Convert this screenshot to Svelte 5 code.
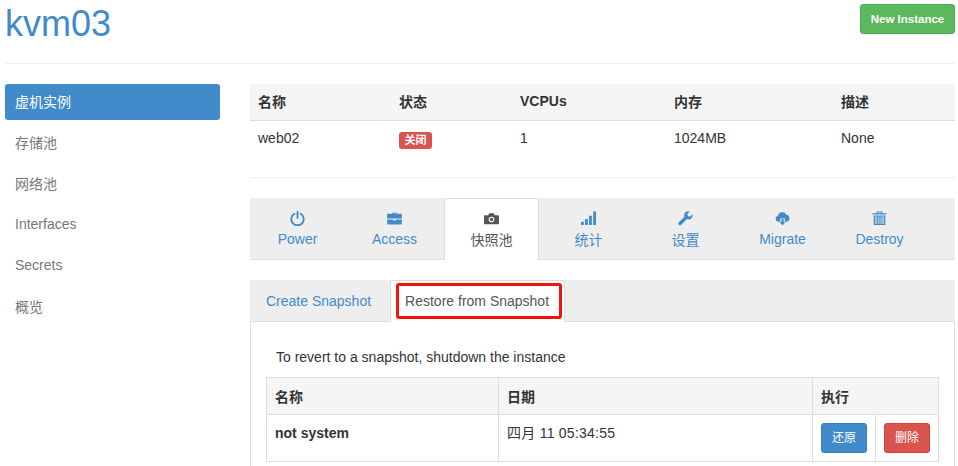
<script>
    const navItems = [
        { label: '虚机实例' },
        { label: '存储池' },
        { label: '网络池' },
        { label: 'Interfaces', latin: true },
        { label: 'Secrets', latin: true },
        { label: '概览' }
    ];

    const tabs = [
        { label: 'Power', icon: 'power', latin: true },
        { label: 'Access', icon: 'case', latin: true },
        { label: '快照池', icon: 'camera', active: true },
        { label: '统计', icon: 'bars' },
        { label: '设置', icon: 'wrench' },
        { label: 'Migrate', icon: 'cloud', latin: true },
        { label: 'Destroy', icon: 'trash', latin: true }
    ];
</script>

<div class="page">
    <header class="head">
        <h1>kvm03</h1>
        <button class="btn new">New Instance</button>
    </header>

    <div class="body">
        <nav class="side">
            {#each navItems as item, i}
                <div class="nav-item" class:on={i === 0} class:latin={item.latin}>{item.label}</div>
            {/each}
        </nav>

        <main class="content">
            <table class="info">
                <thead>
                    <tr>
                        <th class="c1">名称</th>
                        <th class="c2">状态</th>
                        <th class="c3">VCPUs</th>
                        <th class="c4">内存</th>
                        <th>描述</th>
                    </tr>
                </thead>
                <tbody>
                    <tr>
                        <td>web02</td>
                        <td><span class="label">关闭</span></td>
                        <td>1</td>
                        <td>1024MB</td>
                        <td>None</td>
                    </tr>
                </tbody>
            </table>

            <hr />

            <div class="tabs">
                {#each tabs as tab}
                    <div class="tab" class:active={tab.active} class:latin={tab.latin}>
                        <svg class="icon" viewBox="0 0 16 16" aria-hidden="true">
                            {#if tab.icon === 'power'}
                                <path d="M4.6 3a6.600 6.600 0 1 0 6.800 0" fill="none" stroke="currentColor" stroke-width="2" stroke-linecap="round" />
                                <path d="M8 1v6.500" stroke="currentColor" stroke-width="2" stroke-linecap="round" />
                            {:else if tab.icon === 'case'}
                                <path d="M5.5 3V1.8h5V3H15a.8.8 0 0 1 .8.8V8H.2V3.800a.8.8 0 0 1 .8-.8zM6.500 3h3v-.4h-3z" fill="currentColor" fill-rule="evenodd" />
                                <path d="M.2 9h6.300v1.200h3V9h6.300v4.700a.8.8 0 0 1-.8.8H1a.8.8 0 0 1-.8-.8z" fill="currentColor" />
                            {:else if tab.icon === 'camera'}
                                <path d="M5.500 2.500h5l1 2H15a1 1 0 0 1 1 1v7.500a1 1 0 0 1-1 1H1a1 1 0 0 1-1-1V5.500a1 1 0 0 1 1-1h3.500z" fill="currentColor" />
                                <circle cx="8" cy="9" r="3" fill="#fff" />
                                <circle cx="8" cy="9" r="1.800" fill="currentColor" />
                            {:else if tab.icon === 'bars'}
                                <path d="M0 11.500h3V15H0zM4.300 8.500h3V15h-3zM8.600 5h3v10h-3zM13 .5h3V15h-3z" fill="currentColor" />
                            {:else if tab.icon === 'wrench'}
                                <path d="M15.500 3.500l-2.700 2.600-2.200-.7-.7-2.200L12.500.5A4.300 4.300 0 0 0 6.900 6L.9 12a1.800 1.800 0 0 0 2.500 2.600l6.100-6a4.300 4.300 0 0 0 6-5.100z" fill="currentColor" />
                            {:else if tab.icon === 'cloud'}
                                <path d="M3.800 11.500a3.300 3.300 0 0 1-.6-6.500A4.700 4.700 0 0 1 12 4a3.800 3.800 0 0 1 .4 7.500H10.500V8h-5v3.500z" fill="currentColor" />
                                <path d="M6.800 8.500h2.400v3.300h2L8 15.500l-3.200-3.700h2z" fill="currentColor" />
                            {:else}
                                <path d="M5 2.300V.5h6v1.800h4.500v1.400H.5V2.300zm1.300 0h3.400v-.6H6.300z" fill="currentColor" fill-rule="evenodd" />
                                <path d="M1.800 4.700h12.400V15H1.800zm1.300 1.200v7.900h2v-7.900zm3 0v7.900h1v-7.900zm2 0v7.900h1v-7.900zm2 0v7.900h2.800v-7.900z" fill="currentColor" fill-rule="evenodd" />
                                <path d="M3.100 5.900h2v7.900h-2zM6.100 5.900h1v7.900h-1zM8.100 5.900h1v7.900h-1zM10.100 5.900h2.800v7.900h-2.800z" fill="currentColor" opacity="0.45" />
                            {/if}
                        </svg>
                        <span>{tab.label}</span>
                    </div>
                {/each}
            </div>

            <div class="subtabs">
                <div class="subtab">Create Snapshot</div>
                <div class="subtab current"><span class="marked">Restore from Snapshot</span></div>
            </div>

            <section class="pane">
                <p>To revert to a snapshot, shutdown the instance</p>
                <table class="snaps">
                    <thead>
                        <tr>
                            <th class="s1">名称</th>
                            <th class="s2">日期</th>
                            <th colspan="2">执行</th>
                        </tr>
                    </thead>
                    <tbody>
                        <tr>
                            <td><strong>not system</strong></td>
                            <td class="date">四月 11 05:34:55</td>
                            <td class="act"><button class="btn restore">还原</button></td>
                            <td class="act"><button class="btn remove">删除</button></td>
                        </tr>
                    </tbody>
                </table>
            </section>
        </main>
    </div>
</div>

<style>
    :global(body) {
        margin: 0;
        background: #fff;
        overflow: hidden;
    }
    .page {
        height: 466px;
        overflow: hidden;
        box-sizing: border-box;
        padding: 0 3px 0 5px;
        color: #333;
        font-family: "Liberation Sans", "Noto Sans CJK SC", sans-serif;
        font-size: 14px;
        line-height: 20px;
    }
    .head {
        display: flex;
        justify-content: space-between;
        align-items: flex-start;
        height: 63px;
        border-bottom: 1px solid #eee;
    }
    h1 {
        margin: 0;
        padding-top: 4px;
        color: #428bca;
        font-size: 36px;
        font-weight: 400;
        line-height: 40px;
    }
    .btn {
        border: 1px solid transparent;
        border-radius: 3px;
        color: #fff;
        font-family: inherit;
        font-size: 12px;
        line-height: 18px;
        padding: 0;
    }
    .new {
        margin-top: 4px;
        width: 95px;
        height: 30px;
        background: #5cb85c;
        border-color: #4cae4c;
        font-size: 11.5px;
        font-weight: 700;
    }
    .body {
        display: flex;
        gap: 30px;
        padding-top: 20px;
    }
    .side {
        width: 215px;
        flex: none;
    }
    .nav-item {
        height: 36px;
        margin-bottom: 5px;
        padding: 8px 10px;
        box-sizing: border-box;
        border-radius: 3px;
        color: #777;
        font-size: 14px;
    }
    .nav-item.latin {
        padding-top: 7px;
    }
    .nav-item.on {
        background: #428bca;
        color: #fff;
    }
    .content {
        flex: 1;
        min-width: 0;
    }
    table {
        width: 100%;
        table-layout: fixed;
        border-collapse: collapse;
        font-size: 14px;
    }
    .info th {
        height: 36px;
        padding: 0 8px;
        box-sizing: border-box;
        background: #f5f5f5;
        border-bottom: 1px solid #ddd;
        text-align: left;
    }
    .info td {
        height: 36px;
        padding: 7px 8px 0;
        box-sizing: border-box;
        vertical-align: top;
    }
    .c1 { width: 141px; }
    .c2 { width: 121px; }
    .c3 {
        width: 154px;
    }
    .info th.c3 {
        padding-bottom: 2px;
    }
    .c4 { width: 167px; }
    .label {
        display: inline-block;
        vertical-align: top;
        margin-top: 4px;
        padding: 0 5.5px;
        height: 17px;
        background: #d9534f;
        border-radius: 3px;
        color: #fff;
        font-size: 11px;
        font-weight: 700;
        line-height: 17px;
    }
    hr {
        margin: 21px 0 20px;
        border: 0;
        border-top: 1px solid #eee;
    }
    .tabs {
        display: flex;
        gap: 2px;
        height: 62px;
        box-sizing: border-box;
        background: #eee;
        border-bottom: 1px solid #ddd;
    }
    .tab {
        width: 95px;
        height: 62px;
        box-sizing: border-box;
        display: flex;
        flex-direction: column;
        align-items: center;
        padding-top: 12px;
        color: #428bca;
        border: 1px solid transparent;
        border-bottom: 0;
    }
    .tab.active {
        background: #fff;
        border-color: #ddd;
        border-radius: 3px 3px 0 0;
        color: #555;
    }
    .tab span {
        margin-top: 4px;
    }
    .tab.latin span {
        margin-top: 3px;
    }
    .icon {
        width: 15px;
        height: 15px;
    }
    .subtabs {
        display: flex;
        height: 42px;
        box-sizing: border-box;
        margin-top: 20px;
        background: #eee;
        border-bottom: 1px solid #ddd;
    }
    .subtab {
        padding: 11px 16px 0;
        color: #428bca;
    }
    .subtab.current {
        margin-left: 3px;
        padding: 2px 2px 0 5px;
        height: 42px;
        box-sizing: border-box;
        background: #fff;
        border: 1px solid #ddd;
        border-bottom: 0;
        border-radius: 3px 3px 0 0;
    }
    .marked {
        display: block;
        padding: 7px 10px 7px 6px;
        height: 36px;
        box-sizing: border-box;
        border: 3px solid #f0140c;
        border-radius: 3px;
        color: #555;
        line-height: 16px;
        white-space: nowrap;
    }
    .pane {
        padding: 0 15px;
        border: 1px solid #ddd;
        border-top: 0;
        height: 160px;
        box-sizing: border-box;
    }
    .pane p {
        margin: 0;
        padding: 25px 10px 10px;
    }
    .snaps th, .snaps td {
        border: 1px solid #ddd;
        padding: 8px;
        vertical-align: top;
        text-align: left;
    }
    .snaps th {
        height: 37px;
        box-sizing: border-box;
        background: #f5f5f5;
        padding: 9px 8px 7px;
    }
    .snaps td {
        height: 47px;
        box-sizing: border-box;
    }
    .s1 { width: 232px; }
    .s2 { width: 314px; }
    .snaps .date {
        letter-spacing: 0.25px;
    }
    .snaps .act {
        padding: 8px;
        width: 63px;
    }
    .restore, .remove {
        display: block;
        width: 46px;
        height: 30px;
    }
    .restore {
        background: #428bca;
        border-color: #357ebd;
    }
    .remove {
        background: #d9534f;
        border-color: #d43f3a;
    }
</style>
